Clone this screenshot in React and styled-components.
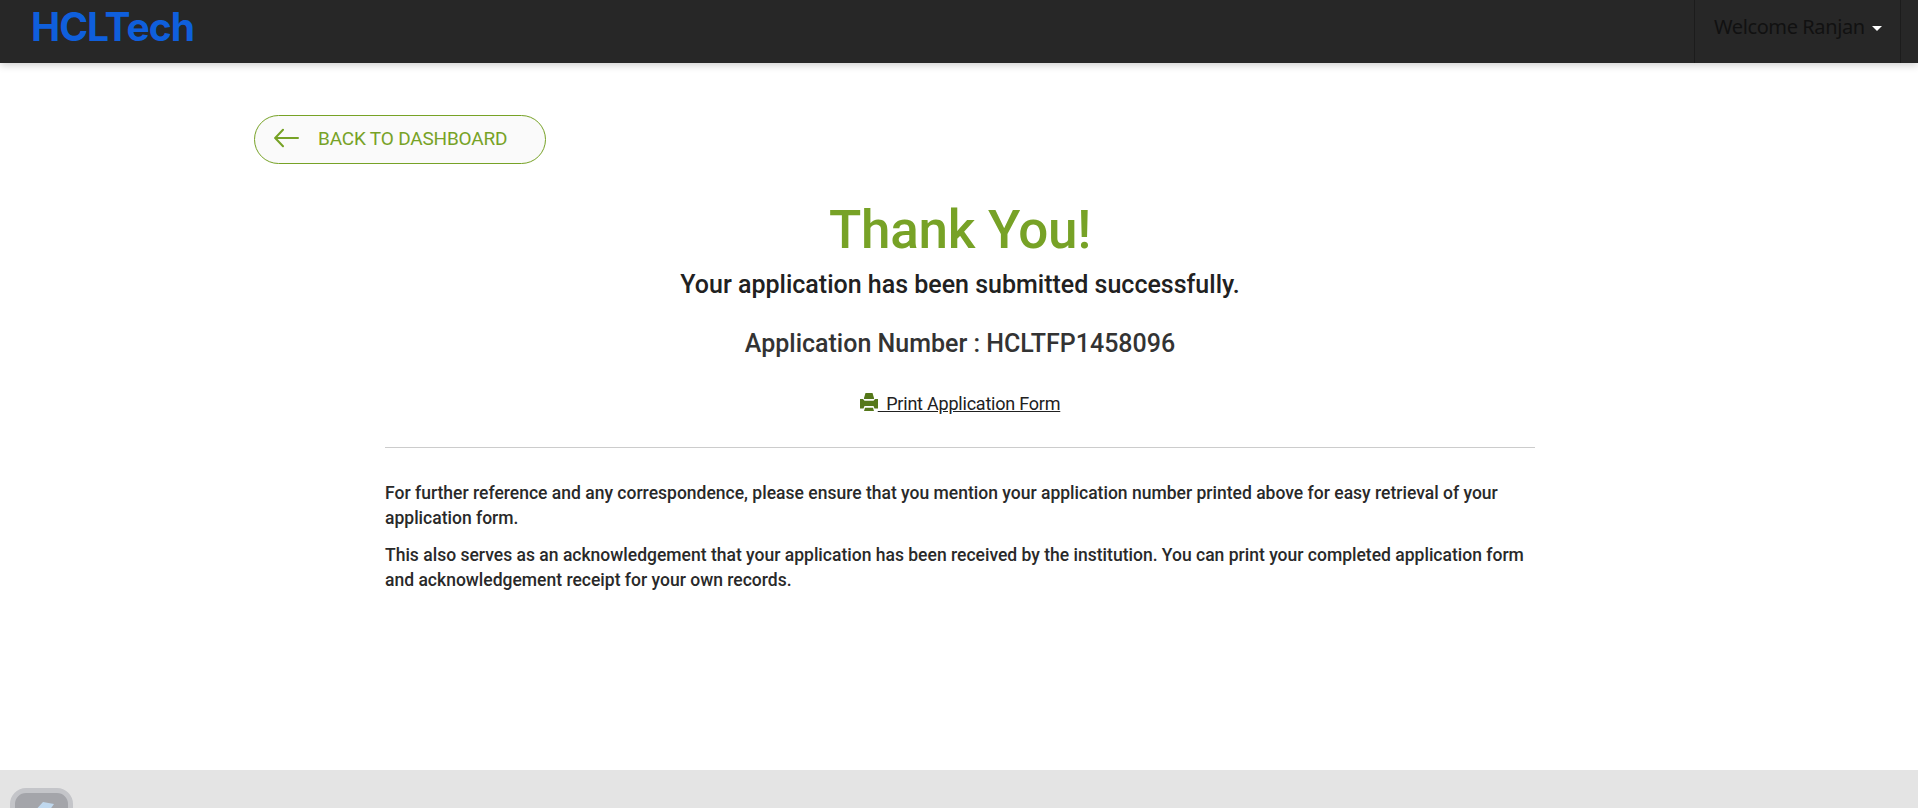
import React from 'react';
import styled, { createGlobalStyle } from 'styled-components';

const GlobalStyle = createGlobalStyle`
  *, *::before, *::after { box-sizing: border-box; }
  body { margin: 0; background: #fff; overflow: hidden; font-family: Roboto, sans-serif; color: #292929; }
  h1, h2, p { margin: 0; }
`;

const Page = styled.div`
  display: flex;
  flex-direction: column;
  height: 808px;
  overflow: hidden;
`;

const Header = styled.header`
  flex: none;
  display: flex;
  justify-content: space-between;
  height: 63px;
  padding: 0 17px 0 31px;
  background: #272727;
  box-shadow: 0 2px 8px rgba(0, 0, 0, 0.2);
`;

const Logo = styled.div`
  font: 700 39px/54px Inter, sans-serif;
  letter-spacing: -1px;
  color: #0f5fdc;
`;

const UserMenu = styled.button`
  display: flex;
  align-items: flex-start;
  width: 207px;
  height: 63px;
  padding: 13px 0 0 19px;
  border: solid #1c1c1c;
  border-width: 0 1px;
  background: transparent;
  color: #111;
  font: 400 20px/27px 'Noto Sans', sans-serif;
  letter-spacing: -0.4px;
  white-space: nowrap;
`;

const Caret = styled.span`
  margin: 13px 0 0 7px;
  border: 5px solid transparent;
  border-top-color: #fff;
  border-bottom: 0;
`;

const Main = styled.main`
  flex: none;
  display: flex;
  flex-direction: column;
  width: 1410px;
  height: 707px;
  margin: 0 auto;
  padding-top: 52px;
`;

const BackButton = styled.button`
  display: flex;
  align-items: center;
  gap: 18px;
  width: 292px;
  height: 49px;
  padding: 0 0 2px 19px;
  border: 1px solid #77a226;
  border-radius: 25px;
  background: #fafafa;
  color: #77a226;
  font: 400 19px/24px Roboto, sans-serif;
  letter-spacing: -0.18px;
  white-space: nowrap;
`;

const BackArrow = styled.svg`
  margin-bottom: 2px;
`;

const Message = styled.section`
  width: 1150px;
  margin: 36px 129px 0 131px;
  text-align: center;
`;

const Title = styled.h1`
  font-size: 53px;
  line-height: 60px;
  font-weight: 500;
  letter-spacing: -0.3px;
  color: #77a226;
`;

const Line = styled.h2`
  margin-top: ${(p) => p.$gap}px;
  font-size: 25px;
  line-height: 30px;
  font-weight: 500;
  color: ${(p) => p.$color};
`;

const PrintLink = styled.a`
  display: inline-flex;
  align-items: flex-start;
  margin-top: 33px;
  font-size: 18px;
  line-height: 24px;
  letter-spacing: -0.22px;
  color: #212121;
  text-decoration: underline;
  white-space: pre;
`;

const PrinterIcon = styled.svg`
  margin-top: 1px;
`;

const Notes = styled.div`
  margin-top: 31px;
  padding-top: 33px;
  border-top: 1px solid #ccc;
  text-align: left;
`;

const Note = styled.p`
  margin-bottom: 12px;
  font-size: 17.52px;
  line-height: 25px;
  font-weight: 500;
  white-space: nowrap;
`;

const Footer = styled.footer`
  flex: none;
  height: 38px;
  padding: 18px 0 0 10px;
  background: #e4e4e4;
  overflow: hidden;
`;

const Badge = styled.div`
  width: 63px;
  height: 63px;
  border: 5px solid #c4c5c9;
  border-radius: 16px;
  background: #a4a5aa;
`;

const Blade = styled.svg`
  display: block;
  margin: 9px 0 0 18px;
`;

export default function App() {
  return (
    <Page>
      <GlobalStyle />
      <Header>
        <Logo>HCLTech</Logo>
        <UserMenu>
          Welcome Ranjan
          <Caret />
        </UserMenu>
      </Header>
      <Main>
        <BackButton>
          <BackArrow width="26" height="20" viewBox="0 0 26 20" fill="none" stroke="currentColor" strokeWidth="2" strokeLinecap="round">
            <path d="M24 10H1.500M9 1.800L1.200 10l7.800 8.200" />
          </BackArrow>
          BACK TO DASHBOARD
        </BackButton>
        <Message>
          <Title>Thank You!</Title>
          <Line $gap={10} $color="#212121">Your application has been submitted successfully.</Line>
          <Line $gap={29} $color="#333">Application Number : HCLTFP1458096</Line>
          <PrintLink>
            <PrinterIcon width="18" height="18" viewBox="0 0 18 18" fill="#55781a">
              <path d="M5.500 0h7l1.500 5v1H4V5zM0 6h3l1.500 1.800h9L15 6h3v9.500h-3.500L13.500 13h-9l-1 2.500H0zM5 14.800h8l1 3.200H4z" />
            </PrinterIcon>
            <span>{'  Print Application Form'}</span>
          </PrintLink>
          <Notes>
            <Note>
              For further reference and any correspondence, please ensure that you mention your application number printed above for easy retrieval of your
              <br />
              application form.
            </Note>
            <Note>
              This also serves as an acknowledgement that your application has been received by the institution. You can print your completed application form
              <br />
              and acknowledgement receipt for your own records.
            </Note>
          </Notes>
        </Message>
      </Main>
      <Footer>
        <Badge>
          <Blade width="26" height="30" viewBox="0 0 26 30" fill="#c0d8ee">
            <path d="M10 0l11 2-5 7h5L6 29l3-17-9-1z" />
          </Blade>
        </Badge>
      </Footer>
    </Page>
  );
}
